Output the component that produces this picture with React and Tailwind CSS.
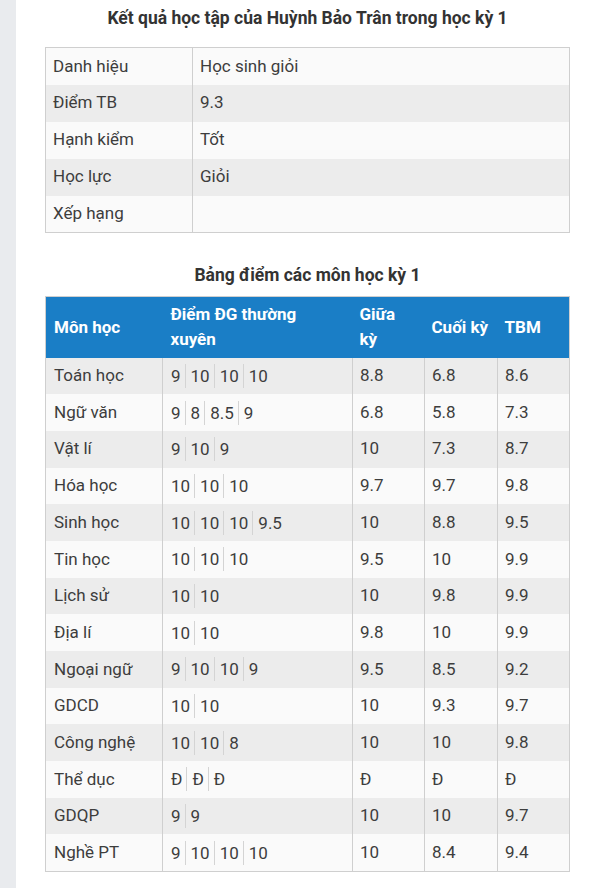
import React from "react";

const info = [
  ["Danh hiệu", "Học sinh giỏi"],
  ["Điểm TB", "9.3"],
  ["Hạnh kiểm", "Tốt"],
  ["Học lực", "Giỏi"],
  ["Xếp hạng", ""],
];

const rows = [
  ["Toán học", ["9", "10", "10", "10"], "8.8", "6.8", "8.6"],
  ["Ngữ văn", ["9", "8", "8.5", "9"], "6.8", "5.8", "7.3"],
  ["Vật lí", ["9", "10", "9"], "10", "7.3", "8.7"],
  ["Hóa học", ["10", "10", "10"], "9.7", "9.7", "9.8"],
  ["Sinh học", ["10", "10", "10", "9.5"], "10", "8.8", "9.5"],
  ["Tin học", ["10", "10", "10"], "9.5", "10", "9.9"],
  ["Lịch sử", ["10", "10"], "10", "9.8", "9.9"],
  ["Địa lí", ["10", "10"], "9.8", "10", "9.9"],
  ["Ngoại ngữ", ["9", "10", "10", "9"], "9.5", "8.5", "9.2"],
  ["GDCD", ["10", "10"], "10", "9.3", "9.7"],
  ["Công nghệ", ["10", "10", "8"], "10", "10", "9.8"],
  ["Thể dục", ["Đ", "Đ", "Đ"], "Đ", "Đ", "Đ"],
  ["GDQP", ["9", "9"], "10", "10", "9.7"],
  ["Nghề PT", ["9", "10", "10", "10"], "10", "8.4", "9.4"],
];

export default function App() {
  return (
    <div
      className="flex w-[600px] h-[888px] bg-white text-[#3d3d3d]"
      style={{ fontFamily: "Roboto, 'Noto Sans', sans-serif" }}
    >
      <div className="w-[16px] shrink-0 bg-[#e9ebee]" />
      <div className="flex-1 pl-[29px] pr-[30px]">
        <h1 className="mt-[7px] h-[22px] text-center text-[17.5px] leading-[22px] font-bold text-[#333]">
          Kết quả học tập của Huỳnh Bảo Trân trong học kỳ 1
        </h1>
        <table className="mt-[18px] w-[525px] table-fixed border-collapse border-[1.5px] border-[#cfcfcf] text-[17px]">
          <colgroup>
            <col className="w-[147px]" />
            <col />
          </colgroup>
          <tbody>
            {info.map(([k, v], i) => (
              <tr
                key={k}
                className={`h-[37px] ${i % 2 === 0 ? "bg-[#fafafa]" : "bg-[#ececec]"}`}
              >
                <td className="border-r-[1.5px] border-[#cfcfcf] pl-[7px] align-middle">{k}</td>
                <td className="pl-[7px] align-middle">{v}</td>
              </tr>
            ))}
          </tbody>
        </table>

        <h2 className="mt-[31px] h-[22px] text-center text-[17.5px] leading-[22px] font-bold text-[#333]">
          Bảng điểm các môn học kỳ 1
        </h2>
        <table className="mt-[10px] w-[525px] table-fixed border-collapse border-[1.5px] border-[#cfcfcf] text-[17px]">
          <colgroup>
            <col className="w-[117px]" />
            <col className="w-[190px]" />
            <col className="w-[72px]" />
            <col className="w-[73px]" />
            <col />
          </colgroup>
          <thead>
            <tr className="h-[61px] bg-[#1a7ec6] text-left text-[17px] leading-[25px] font-bold text-white">
              <th className="pl-[8px] pr-[4px] align-middle">Môn học</th>
              <th className="pl-[8px] pr-[20px] align-middle">Điểm ĐG thường xuyên</th>
              <th className="pl-[7px] pr-[8px] align-middle">Giữa kỳ</th>
              <th className="pl-[7px] pr-[2px] align-middle whitespace-nowrap">Cuối kỳ</th>
              <th className="pl-[7px] pr-[4px] align-middle">TBM</th>
            </tr>
          </thead>
          <tbody>
            {rows.map(([name, dg, gk, ck, tbm], i) => (
              <tr
                key={name}
                className={`h-[36.7px] ${i % 2 === 0 ? "bg-[#ececec]" : "bg-[#fafafa]"}`}
              >
                <td className="border-r-[1.5px] border-[#cfcfcf] pl-[8px] align-middle">{name}</td>
                <td className="border-r-[1.5px] border-[#cfcfcf] pl-[8px] align-middle">
                  <div className="flex items-center">
                    {dg.map((s, j) => (
                      <span
                        key={j}
                        className={`leading-[24px] ${j === 0 ? "pl-0" : "pl-[5px]"} ${
                          j < dg.length - 1 ? "pr-[4px] border-r border-[#d4d4d4]" : ""
                        }`}
                      >
                        {s}
                      </span>
                    ))}
                  </div>
                </td>
                <td className="border-r-[1.5px] border-[#cfcfcf] pl-[7px] align-middle">{gk}</td>
                <td className="border-r-[1.5px] border-[#cfcfcf] pl-[7px] align-middle">{ck}</td>
                <td className="pl-[7px] align-middle">{tbm}</td>
              </tr>
            ))}
          </tbody>
        </table>
      </div>
    </div>
  );
}
